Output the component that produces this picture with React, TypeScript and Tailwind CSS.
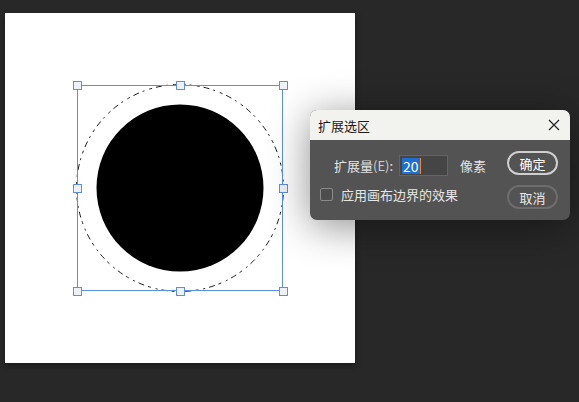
import React from "react";

const font = { fontFamily: '"Noto Sans CJK SC", "Noto Sans", sans-serif' };

function Artwork() {
  const handles = [
    [72, 72], [175, 72], [278, 72],
    [72, 175], [278, 175],
    [72, 278], [175, 278], [278, 278],
  ];
  return (
    <svg width="350" height="350" viewBox="0 0 350 350" className="block">
      <circle cx="175" cy="175" r="83.5" fill="#000" />
      <circle cx="175" cy="175" r="103.5" fill="none" stroke="#000" strokeWidth="0.9" strokeDasharray="3 4 6 4 2 5" />
      <rect x="72.5" y="72.5" width="205" height="205" fill="none" stroke="#5b8fe6" strokeWidth="1" />
      {handles.map(([x, y], i) => (
        <rect key={i} x={x - 3.5} y={y - 3.5} width="8" height="8" fill="#eef1f6" stroke="#5b8fe6" strokeWidth="1" />
      ))}
    </svg>
  );
}

export default function App() {
  return (
    <div className="relative w-[579px] h-[402px] bg-[#282828] overflow-hidden" style={font}>
      <div className="absolute left-[5px] top-[13px] w-[350px] h-[350px] bg-white shadow-[0_3px_6px_rgba(0,0,0,0.35)]">
        <Artwork />
      </div>

      <div className="absolute left-[310px] top-[110px] w-[260px] h-[110px] rounded-[7px] overflow-hidden bg-[#535353] shadow-[0_6px_40px_rgba(0,0,0,0.45)] flex flex-col">
        <div className="h-[30px] bg-[#f2f2ef] flex items-center justify-between pl-[8px] pr-[10px]">
          <span className="text-[13px] text-[#1a1a1a] leading-none">扩展选区</span>
          <svg width="12" height="12" viewBox="0 0 12 12">
            <path d="M1 1 L11 11 M11 1 L1 11" stroke="#222" strokeWidth="1.2" fill="none" />
          </svg>
        </div>
        <div className="flex-1 flex pl-[10px] pr-[12px] pt-[11px]">
          <div className="flex-1 flex flex-col pt-[4px]">
            <div className="flex items-center h-[21px] pl-[14px]">
              <span className="text-[13px] text-[#e3e3e3] leading-none">
                扩展量<span className="text-[#c9cfd8]">(E)</span>:
              </span>
              <div className="ml-[6px] w-[49px] h-[21px] border border-[#1473e6] bg-[#454545] flex items-center pl-[2px]">
                <span className="bg-[#1f6fd1] text-white text-[14px] leading-[16px] px-[1px]">20</span>
                <span className="w-[1px] h-[16px] bg-[#f08a24]" />
              </div>
              <span className="ml-[12px] text-[13px] text-[#e3e3e3] leading-none">像素</span>
            </div>
            <div className="flex items-center mt-[12px]">
              <span className="w-[13px] h-[13px] rounded-[2px] border border-[#8a8a8a] bg-[#4d4d4d]" />
              <span className="ml-[8px] text-[13px] text-[#e6e6e6] leading-none">应用画布边界的效果</span>
            </div>
          </div>
          <div className="flex flex-col gap-[10px]">
            <button className="w-[51px] h-[24px] rounded-full border-2 border-[#cfcfcf] text-white text-[13px] leading-none flex items-center justify-center">确定</button>
            <button className="w-[51px] h-[24px] rounded-full border-2 border-[#6d6d6d] text-[#e8e8e8] text-[13px] leading-none flex items-center justify-center">取消</button>
          </div>
        </div>
      </div>
    </div>
  );
}
